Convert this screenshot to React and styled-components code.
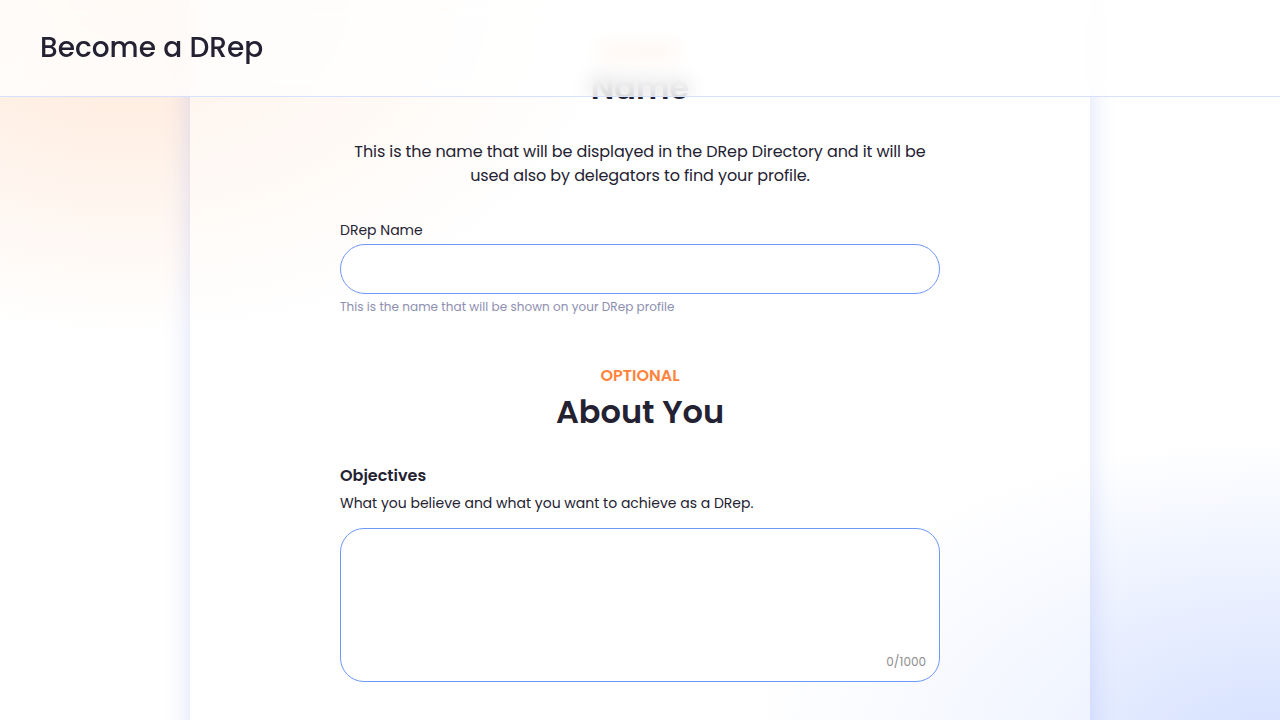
import React from 'react';
import styled, { createGlobalStyle } from 'styled-components';

const GlobalStyle = createGlobalStyle`
  * { box-sizing: border-box; }
  html, body { margin: 0; padding: 0; }
  body {
    font-family: "Poppins", "Inter", "Noto Sans", sans-serif;
    color: #242232;
    min-height: 100vh;
    background:
      radial-gradient(ellipse 700px 480px at 10% 0%, rgba(255, 214, 186, 0.6), rgba(255, 214, 186, 0) 70%),
      radial-gradient(ellipse 760px 460px at 100% 100%, rgba(200, 215, 255, 0.8), rgba(200, 215, 255, 0) 70%),
      #ffffff;
  }
`;

const Header = styled.header`
  position: fixed;
  top: 0;
  left: 0;
  right: 0;
  height: 97px;
  display: flex;
  align-items: center;
  padding: 0 40px;
  background: rgba(255, 255, 255, 0.78);
  backdrop-filter: blur(10px);
  border-bottom: 1px solid #d6e0ff;
  z-index: 10;
`;

const HeaderTitle = styled.h1`
  margin: 0;
  font-size: 28px;
  font-weight: 500;
  color: #242232;
`;

const Page = styled.main`
  display: flex;
  justify-content: center;
`;

const Card = styled.section`
  width: 900px;
  min-height: 760px;
  padding: 40px 150px 60px;
  background: rgba(255, 255, 255, 0.45);
  box-shadow: 0 0 24px rgba(90, 120, 230, 0.22);
  display: flex;
  flex-direction: column;
`;

const Eyebrow = styled.div`
  font-size: 16px;
  line-height: 24px;
  font-weight: 600;
  color: #ff833b;
  text-transform: uppercase;
  text-align: center;
`;

const SectionTitle = styled.h2`
  margin: 4px 0 32px;
  font-size: 32px;
  line-height: 40px;
  font-weight: 600;
  text-align: center;
  color: #242232;
`;

const Description = styled.p`
  margin: 0 0 32px;
  font-size: 16px;
  line-height: 24px;
  letter-spacing: -0.1px;
  text-align: center;
  padding: 0 10px;
`;

const Field = styled.div`
  display: flex;
  flex-direction: column;
  margin-bottom: ${p => p.gap || 0}px;
`;

const Label = styled.label`
  font-size: 14px;
  line-height: 20px;
  margin-bottom: 4px;
`;

const TextInput = styled.input`
  height: 50px;
  border: 1px solid #6e98f8;
  border-radius: 25px;
  background: #ffffff;
  padding: 0 20px;
  font: inherit;
  outline: none;
`;

const Helper = styled.div`
  margin-top: 4px;
  font-size: 12px;
  line-height: 18px;
  letter-spacing: 0.05px;
  color: #8e8eb0;
`;

const FieldTitle = styled.div`
  font-size: 16px;
  line-height: 24px;
  font-weight: 600;
`;

const FieldSub = styled.div`
  margin-top: 5px;
  font-size: 14px;
  line-height: 20px;
  margin-bottom: 15px;
`;

const AreaBox = styled.div`
  position: relative;
  height: 154px;
  border: 1px solid #6e98f8;
  border-radius: 24px;
  background: #ffffff;
`;

const Counter = styled.span`
  position: absolute;
  right: 13px;
  bottom: 10px;
  font-size: 12px;
  line-height: 18px;
  color: #8e8e8e;
`;

const App = () => (
  <>
    <GlobalStyle />
    <Header>
      <HeaderTitle>Become a DRep</HeaderTitle>
    </Header>
    <Page>
      <Card>
        <Eyebrow>Required</Eyebrow>
        <SectionTitle>Name</SectionTitle>
        <Description>
          This is the name that will be displayed in the DRep Directory and it will be used also by delegators to find your profile.
        </Description>
        <Field gap={48}>
          <Label>DRep Name</Label>
          <TextInput />
          <Helper>This is the name that will be shown on your DRep profile</Helper>
        </Field>
        <Eyebrow>Optional</Eyebrow>
        <SectionTitle>About You</SectionTitle>
        <Field>
          <FieldTitle>Objectives</FieldTitle>
          <FieldSub>What you believe and what you want to achieve as a DRep.</FieldSub>
          <AreaBox>
            <Counter>0/1000</Counter>
          </AreaBox>
        </Field>
      </Card>
    </Page>
  </>
);

export default App;
